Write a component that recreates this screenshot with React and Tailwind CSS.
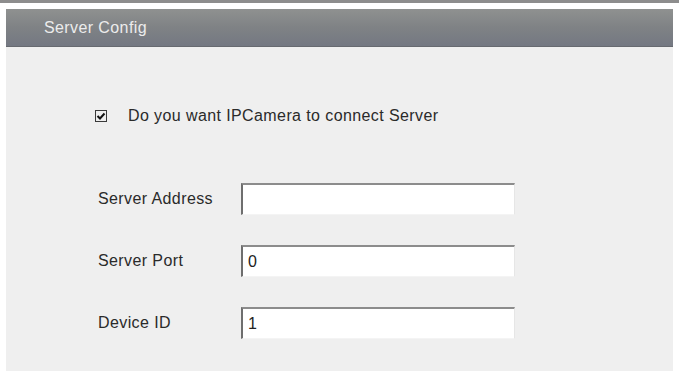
import React from 'react';

const Field = ({ label, value }) => (
  <div className="flex items-center h-[32px]">
    <label className="w-[143px] text-[16px] text-[#2a2a2a] tracking-[0.4px]">{label}</label>
    <div className="w-[274px] h-[32px] bg-white border-t-2 border-l-2 border-t-[#8c8c8c] border-l-[#6e6e6e] border-r border-b border-r-[#e6e6e6] border-b-[#f4f4f4] pl-[5px] flex items-center text-[16px] text-[#222]">
      {value}
    </div>
  </div>
);

const App = () => {
  return (
    <div className="w-[679px] h-[376px] bg-white flex flex-col font-['Liberation_Sans',Arial,sans-serif]">
      <div className="h-[3px] bg-[#8d8d8d]" />
      <div className="h-[6px] bg-white" />
      <div className="mx-[6px] flex flex-col flex-1">
        {/* Header bar */}
        <div className="h-[38px] bg-gradient-to-b from-[#8f9190] via-[#7f8285] to-[#747882] border-b border-[#676a70] flex items-center pl-[38px]">
          <span className="text-[16px] text-[#ececec] tracking-[0.4px]">Server Config</span>
        </div>
        {/* Body */}
        <div className="bg-[#efefef] h-[324px] pt-[62px] pl-[89px]">
          <div className="flex items-center gap-[21px] h-[14px]">
            <div className="w-[12px] h-[12px] border border-[#3a3a3a] bg-[#eee] flex items-center justify-center">
              <svg width="10" height="10" viewBox="0 0 10 10">
                <path d="M1.5 5 L4 7.5 L8.5 2.5" stroke="#111" strokeWidth="2" fill="none" />
              </svg>
            </div>
            <span className="text-[16px] text-[#2a2a2a] tracking-[0.4px]">Do you want IPCamera to connect Server</span>
          </div>
          <div className="flex flex-col gap-[30px] mt-[60px] ml-[4px] -translate-x-[1px]">
            <Field label="Server Address" value="" />
            <Field label="Server Port" value="0" />
            <Field label="Device ID" value="1" />
          </div>
        </div>
      </div>
    </div>
  );
};

export default App;
